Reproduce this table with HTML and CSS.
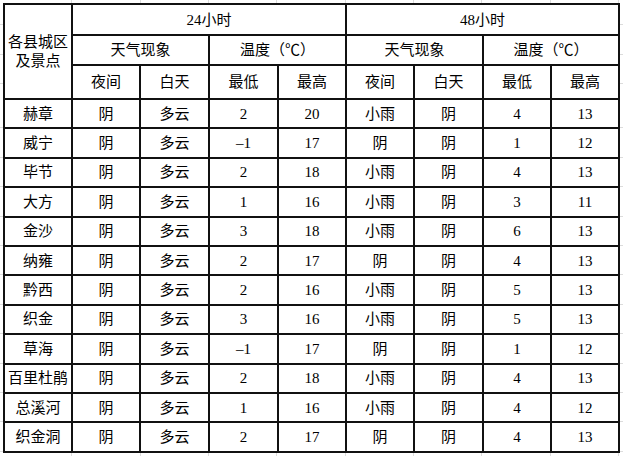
FILE: index.html
```html
<!DOCTYPE html>
<html lang="zh-CN">
<head>
<meta charset="utf-8">
<title>天气预报</title>
<link rel="stylesheet" href="styles.css">
</head>
<body>
<div class="sheet">
<table class="wx">
<colgroup>
<col class="c68"><col class="c68"><col class="c69"><col class="c69"><col class="c68"><col class="c68"><col class="c69"><col class="c68"><col class="c68">
</colgroup>
<tr class="h1"><td rowspan="3" class="name">各县城区<br>及景点</td><td colspan="4">24小时</td><td colspan="4">48小时</td></tr>
<tr class="h2"><td colspan="2">天气现象</td><td colspan="2">温度（℃）</td><td colspan="2">天气现象</td><td colspan="2">温度（℃）</td></tr>
<tr class="h3"><td>夜间</td><td>白天</td><td>最低</td><td>最高</td><td>夜间</td><td>白天</td><td>最低</td><td>最高</td></tr>
<tr><td>赫章</td><td>阴</td><td>多云</td><td>2</td><td>20</td><td>小雨</td><td>阴</td><td>4</td><td>13</td></tr>
<tr><td>威宁</td><td>阴</td><td>多云</td><td>–1</td><td>17</td><td>阴</td><td>阴</td><td>1</td><td>12</td></tr>
<tr><td>毕节</td><td>阴</td><td>多云</td><td>2</td><td>18</td><td>小雨</td><td>阴</td><td>4</td><td>13</td></tr>
<tr><td>大方</td><td>阴</td><td>多云</td><td>1</td><td>16</td><td>小雨</td><td>阴</td><td>3</td><td>11</td></tr>
<tr><td>金沙</td><td>阴</td><td>多云</td><td>3</td><td>18</td><td>小雨</td><td>阴</td><td>6</td><td>13</td></tr>
<tr><td>纳雍</td><td>阴</td><td>多云</td><td>2</td><td>17</td><td>阴</td><td>阴</td><td>4</td><td>13</td></tr>
<tr><td>黔西</td><td>阴</td><td>多云</td><td>2</td><td>16</td><td>小雨</td><td>阴</td><td>5</td><td>13</td></tr>
<tr><td>织金</td><td>阴</td><td>多云</td><td>3</td><td>16</td><td>小雨</td><td>阴</td><td>5</td><td>13</td></tr>
<tr><td>草海</td><td>阴</td><td>多云</td><td>–1</td><td>17</td><td>阴</td><td>阴</td><td>1</td><td>12</td></tr>
<tr><td>百里杜鹃</td><td>阴</td><td>多云</td><td>2</td><td>18</td><td>小雨</td><td>阴</td><td>4</td><td>13</td></tr>
<tr><td>总溪河</td><td>阴</td><td>多云</td><td>1</td><td>16</td><td>小雨</td><td>阴</td><td>4</td><td>12</td></tr>
<tr><td>织金洞</td><td>阴</td><td>多云</td><td>2</td><td>17</td><td>阴</td><td>阴</td><td>4</td><td>13</td></tr>
</table>
</div>
</body>
</html>
```
FILE: styles.css
```css
html, body {
  margin: 0;
  padding: 0;
  background: #fff;
}
.sheet {
  width: 623px;
  height: 456px;
  overflow: hidden;
  padding: 3px 0 0 3px;
  box-sizing: border-box;
  background-color: #fff;
  background-image:
    repeating-linear-gradient(to right, transparent 0 67.3px, #dcdcdc 67.3px 68.33px),
    repeating-linear-gradient(to bottom, transparent 0 28.4px, #dcdcdc 28.4px 29.4px);
  background-position: 4px 0, 0 99px;
}
.wx {
  border-collapse: collapse;
  table-layout: fixed;
  width: 617px;
  font-family: "Liberation Serif", "Noto Sans CJK SC", serif;
  font-size: 15px;
  color: #000;
  background: #fff;
}
.c68 { width: 68px; }
.c69 { width: 69px; }
.wx td {
  border: 2px solid #111;
  text-align: center;
  vertical-align: middle;
  padding: 0;
  height: 27.4px;
  line-height: 18px;
  white-space: nowrap;
  overflow: hidden;
}
.wx .h1 td { height: 29px; }
.wx .h2 td { height: 28px; }
.wx .h3 td { height: 32px; }
.wx td.name { line-height: 19px; }
```
